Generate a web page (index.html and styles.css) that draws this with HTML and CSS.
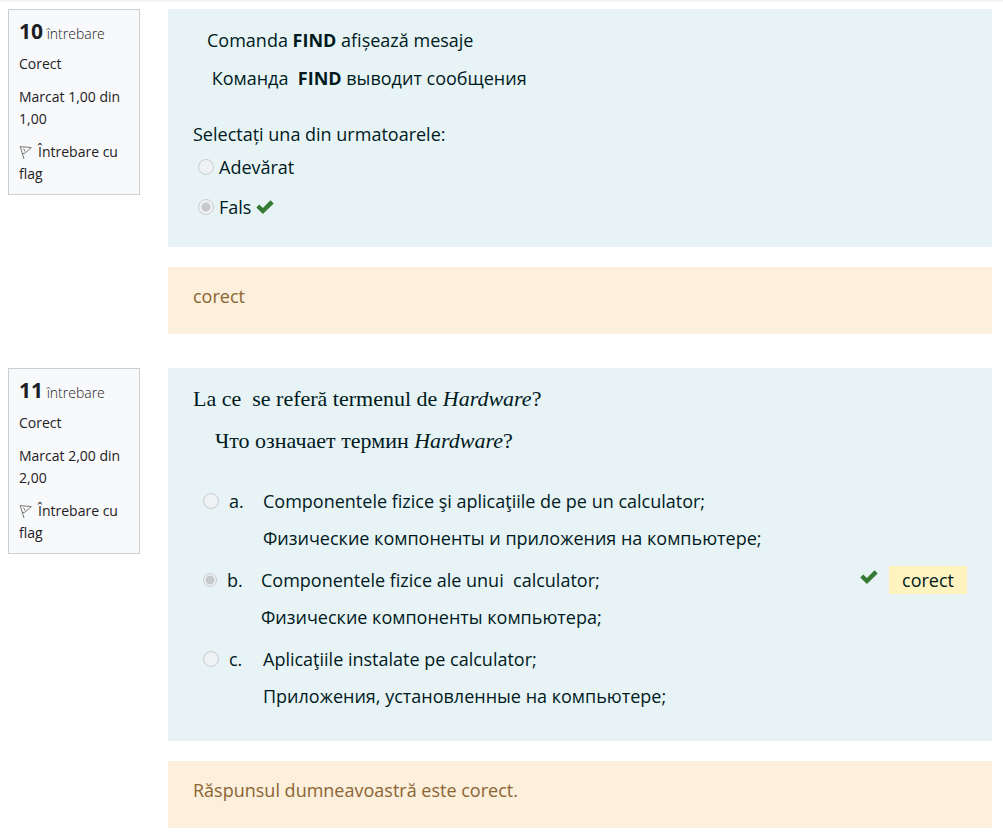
FILE: index.html
```html
<!DOCTYPE html>
<html lang="ro">
<head>
<meta charset="utf-8">
<meta name="viewport" content="width=device-width, initial-scale=1">
<title>Test</title>
<link rel="stylesheet" href="styles.css">
</head>
<body>
<main class="quiz">
  <section class="question">
    <aside class="info">
      <h2 class="number"><strong>10</strong> întrebare</h2>
      <p>Corect</p>
      <p>Marcat 1,00 din 1,00</p>
      <a class="flag" href="#"><svg class="flag-icon" viewBox="0 0 14 15" aria-hidden="true"><path d="M1.2 1.6 5 14M1.2 1.6 12.3 2.6 5.6 8.4 3.4 8.6M4.6 3.6 6 6.6"/></svg>Întrebare cu flag</a>
    </aside>
    <div class="content">
      <div class="formulation">
        <p class="prompt">&nbsp;&nbsp; Comanda <b>FIND</b> afișează mesaje</p>
        <p class="prompt">&nbsp;&nbsp;&nbsp; Команда&nbsp; <b>FIND</b> выводит сообщения</p>
        <fieldset class="truefalse">
          <legend>Selectați una din urmatoarele:</legend>
          <div class="choice"><input type="radio" class="radio" name="q10" id="q10t" disabled><label for="q10t">Adevărat</label></div>
          <div class="choice"><input type="radio" class="radio" name="q10" id="q10f" checked disabled><label for="q10f">Fals</label><svg class="check" viewBox="0 0 18 14" role="img" aria-label="Corect"><path d="M.3 7.5 3.3 4.5 6.9 7.9 14.5.3 17.7 3.5 6.9 14Z"/></svg></div>
        </fieldset>
      </div>
      <div class="feedback">corect</div>
    </div>
  </section>

  <section class="question">
    <aside class="info">
      <h2 class="number"><strong>11</strong> întrebare</h2>
      <p>Corect</p>
      <p>Marcat 2,00 din 2,00</p>
      <a class="flag" href="#"><svg class="flag-icon" viewBox="0 0 14 15" aria-hidden="true"><path d="M1.2 1.6 5 14M1.2 1.6 12.3 2.6 5.6 8.4 3.4 8.6M4.6 3.6 6 6.6"/></svg>Întrebare cu flag</a>
    </aside>
    <div class="content">
      <div class="formulation">
        <p class="prompt serif">La ce&nbsp; se referă termenul de <i>Hardware</i>?</p>
        <p class="prompt serif">&nbsp;&nbsp;&nbsp; Что означает термин <i>Hardware</i>?</p>
        <div class="answers">
          <div class="answer">
            <input type="radio" class="radio" name="q11" id="q11a" disabled>
            <label for="q11a"><span class="letter">a.</span><span class="text"><span>Componentele fizice şi aplicaţiile de pe un calculator;</span><span>Физические компоненты и приложения на компьютере;</span></span></label>
          </div>
          <div class="answer selected">
            <input type="radio" class="radio" name="q11" id="q11b" checked disabled>
            <label for="q11b"><span class="letter">b.</span><span class="text"><span>Componentele fizice ale unui&nbsp; calculator;</span><span>Физические компоненты компьютера;</span></span></label>
            <svg class="check" viewBox="0 0 18 14" role="img" aria-label="Corect"><path d="M.3 7.5 3.3 4.5 6.9 7.9 14.5.3 17.7 3.5 6.9 14Z"/></svg>
            <span class="specific">corect</span>
          </div>
          <div class="answer">
            <input type="radio" class="radio" name="q11" id="q11c" disabled>
            <label for="q11c"><span class="letter">c.</span><span class="text"><span>Aplicaţiile instalate pe calculator;</span><span>Приложения, установленные на компьютере;</span></span></label>
          </div>
        </div>
      </div>
      <div class="feedback">Răspunsul dumneavoastră este corect.</div>
    </div>
  </section>
</main>
</body>
</html>
```
FILE: styles.css
```css
* { box-sizing: border-box; }
body {
  margin: 0;
  background: #fff;
  color: #001a1e;
  font: 18px/28px "Open Sans", "Noto Sans", sans-serif;
}
p, h2 { margin: 0; }
.quiz {
  border-top: 2px solid #f5f5f5;
  padding: 7px 11px 0 8px;
}
.question {
  display: grid;
  grid-template-columns: 132px 1fr;
  gap: 28px;
  align-items: start;
  margin-bottom: 34px;
}
.info {
  border: 1px solid #cacfd3;
  background: #f8f9fa;
  color: #1d2125;
  padding: 11px 8px 9px 10px;
  font-size: 14px;
  line-height: 22px;
  display: grid;
  gap: 11px;
}
.number {
  font-size: 14px;
  font-weight: 300;
  line-height: 16px;
}
.number strong { font-size: 21px; font-weight: 700; line-height: 1; }
.flag { color: inherit; text-decoration: none; }
.flag-icon {
  width: 14px;
  height: 15px;
  margin-right: 5px;
  vertical-align: -3px;
  fill: none;
  stroke: #777;
  stroke-width: 1;
}
.formulation {
  background: #e7f3f5;
  padding: 17px 25px 26px;
  margin-bottom: 20px;
}
.prompt { margin-bottom: 10px; }
.serif {
  font-family: "Liberation Serif", serif;
  font-size: 22px;
  line-height: 28px;
  margin-bottom: 14px;
}
.truefalse { border: 0; margin: 28px 0 0; padding: 0; }
.truefalse legend { padding: 0; margin-bottom: 5px; }
.choice {
  display: flex;
  align-items: center;
  gap: 5px;
  padding-left: 5px;
}
.choice + .choice { margin-top: 12px; }
.radio {
  appearance: none;
  flex: none;
  width: 16px;
  height: 16px;
  margin: 0;
  border: 1px solid #cacdd0;
  border-radius: 50%;
  background: #eff2f4;
}
.radio:checked {
  background: radial-gradient(circle, #c6c8ca 0 4px, #eff2f4 5px);
}
.check { width: 18px; height: 14px; fill: #357a32; flex: none; }
.answers {
  display: grid;
  gap: 14px;
  margin-top: 32px;
  padding: 0 0 5px 10px;
}
.answer { display: flex; }
.answer .radio { margin: 6px 10px 0 0; }
.answer.selected .radio { width: 14px; height: 14px; margin-top: 7px; }
.answer label { display: flex; flex: 1; }
.letter { flex: none; width: 34px; }
.text { display: grid; gap: 9px; font-feature-settings: "locl" 0; }
.answer .check { margin: 4px 11px 0 0; }
.specific {
  align-self: start;
  background: #fff3bf;
  padding: 0 13px;
}
.feedback {
  background: #fcefdc;
  color: #8b6533;
  padding: 15px 25px 24px;
}
```
